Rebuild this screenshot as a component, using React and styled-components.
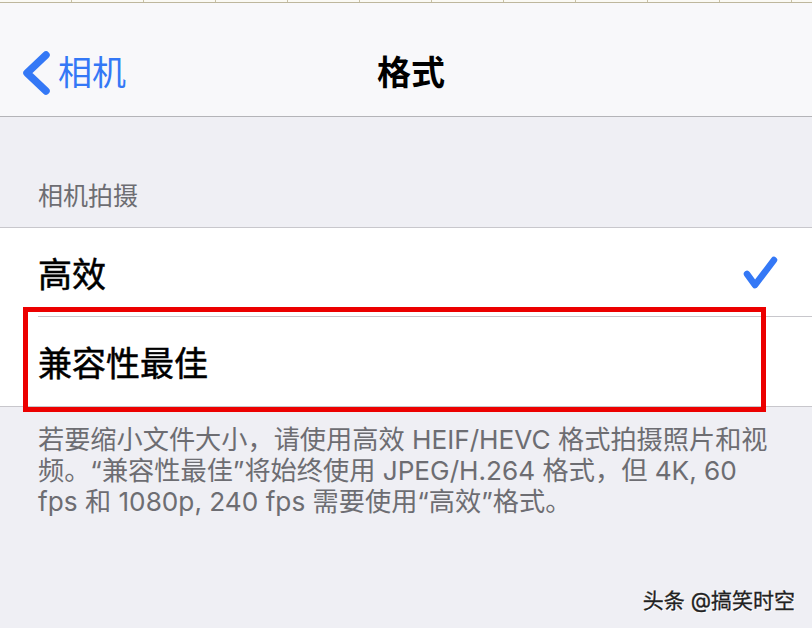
import React from 'react';
import styled, { createGlobalStyle } from 'styled-components';

const GlobalStyle = createGlobalStyle`
  html, body {
    margin: 0;
    padding: 0;
    background: #efeff4;
  }
  body {
    font-family: "Inter", "Noto Sans CJK SC", sans-serif;
    -webkit-font-smoothing: antialiased;
  }
`;

const Page = styled.div`
  position: relative;
  width: 812px;
  min-height: 628px;
  background: #efeff4;
  overflow: hidden;
`;

// strip of the sheet that sits above the screenshot
const TopStrip = styled.div`
  height: 2px;
  background: repeating-linear-gradient(
    to right,
    #fbfaf4 0,
    #fbfaf4 71px,
    #c9c2a6 71px,
    #c9c2a6 72px
  );
  border-bottom: 1px solid #beb79d;
`;

const NavBar = styled.header`
  display: grid;
  grid-template-columns: 1fr auto 1fr;
  align-items: center;
  height: 44px;
  padding: 47px 0 22px;
  background: #f8f8fa;
  border-bottom: 1px solid #b4b4b8;
`;

const BackButton = styled.div`
  display: flex;
  align-items: center;
  gap: 5px;
  padding-left: 21px;
  color: #3478f6;
  font-size: 34px;
  line-height: 44px;
`;

const Title = styled.h1`
  margin: 0 0 0 10px;
  font-size: 34px;
  font-weight: 700;
  line-height: 44px;
  color: #000;
`;

const SectionHeader = styled.div`
  padding: 64px 38px 15px;
  font-size: 25px;
  line-height: 31px;
  color: #6d6d72;
`;

const Group = styled.div`
  position: relative;
  background: #fff;
  border-top: 1px solid #c8c7cc;
  border-bottom: 1px solid #c8c7cc;
  padding-left: 38px;
`;

const Cell = styled.div`
  display: flex;
  align-items: center;
  justify-content: space-between;
  box-sizing: border-box;
  height: 89px;
  padding-right: 33px;
  border-bottom: ${(p) => (p.$last ? 'none' : '1px solid #c8c7cc')};
  font-size: 34px;
  font-weight: 400;
  color: #000;
  -webkit-text-stroke: 0.5px #000;
`;

const Highlight = styled.div`
  position: absolute;
  left: 23px;
  top: 79px;
  width: 743px;
  height: 105px;
  box-sizing: border-box;
  border: 5px solid #ec0000;
  pointer-events: none;
`;

const Footer = styled.p`
  margin: 0;
  padding: 17px 38px 0;
  font-size: 26.2px;
  line-height: 31px;
  color: #6d6d72;
`;

const Watermark = styled.div`
  position: absolute;
  right: 17px;
  top: 587px;
  font-size: 21px;
  line-height: 28px;
  color: #222;
  -webkit-text-stroke: 0.3px #222;
  text-shadow: 0 0 2px #fff, 1px 1px 0 #fff;
`;

const Chevron = () => (
  <svg width="32" height="46" viewBox="0 0 32 46">
    <path
      d="M25 5 L6 23 L25 41"
      fill="none"
      stroke="#3478f6"
      strokeWidth="7.5"
      strokeLinecap="round"
      strokeLinejoin="round"
    />
  </svg>
);

const Check = () => (
  <svg width="38" height="36" viewBox="0 0 38 36">
    <path
      d="M6 20 L14 31 L33 6"
      fill="none"
      stroke="#3478f6"
      strokeWidth="6.5"
      strokeLinecap="round"
      strokeLinejoin="round"
    />
  </svg>
);

export default function App() {
  return (
    <>
      <GlobalStyle />
      <Page>
        <TopStrip />
        <NavBar>
          <BackButton>
            <Chevron />
            <span>相机</span>
          </BackButton>
          <Title>格式</Title>
          <div />
        </NavBar>

        <SectionHeader>相机拍摄</SectionHeader>
        <Group>
          <Cell>
            <span>高效</span>
            <Check />
          </Cell>
          <Cell $last>
            <span>兼容性最佳</span>
          </Cell>
          <Highlight />
        </Group>

        <Footer>
          若要缩小文件大小，请使用高效 HEIF/HEVC 格式拍摄照片和视频。“兼容性最佳”将始终使用 JPEG/H.264 格式，但 4K, 60 fps 和 1080p, 240 fps 需要使用“高效”格式。
        </Footer>

        <Watermark>头条 @搞笑时空</Watermark>
      </Page>
    </>
  );
}
